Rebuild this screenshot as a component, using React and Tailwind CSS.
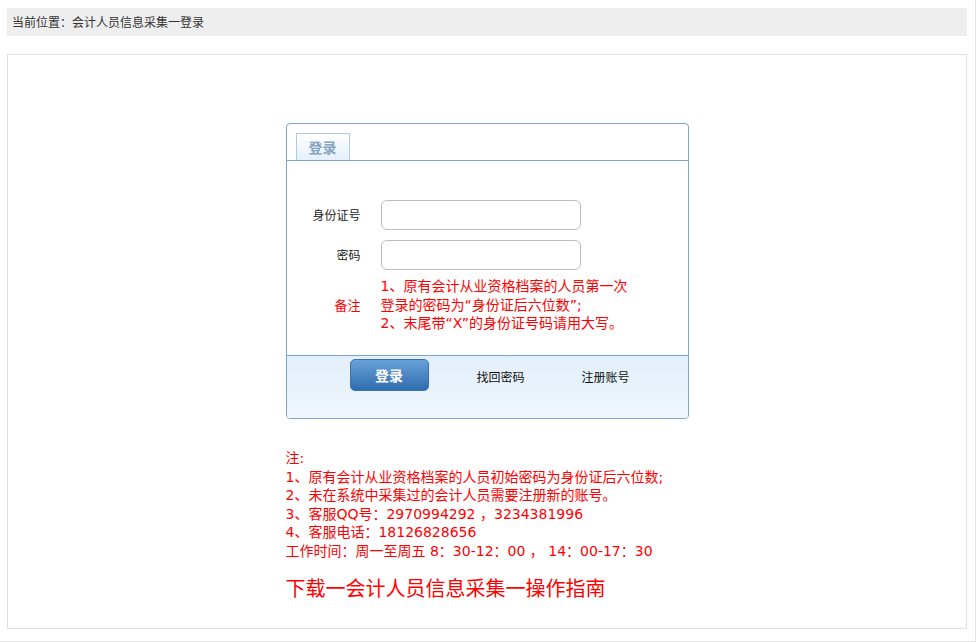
import React, { useState } from "react";

const LoginPage = () => {
  const [formData, setFormData] = useState({ idcard: "", password: "" });

  const handleChange = (event) => {
    setFormData((prev) => ({ ...prev, [event.target.name]: event.target.value }));
  };

  return (
    <div
      className="w-[976px] h-[642px] bg-white border-r border-b border-[#e2e2e2] pt-2 px-[7px] text-[#333]"
      style={{ fontFamily: '"Noto Sans CJK SC", "Noto Sans", sans-serif' }}
    >
      {/* breadcrumb */}
      <div className="h-[28px] w-[960px] bg-[#eeeeee] pl-[5px] flex items-center text-[12px] text-[#333]">
        当前位置：会计人员信息采集一登录
      </div>

      {/* main panel */}
      <div className="mt-[18px] w-[960px] h-[575px] border border-[#dde0e6] flex flex-col items-center pt-[68px]">
        <div className="w-[403px]">
          <div className="w-[403px] h-[296px] border border-[#7aa4d2] rounded-[4px] flex flex-col overflow-hidden">
            {/* tab header */}
            <div className="h-[37px] border-b border-[#7aa4d2] pl-[9px] pt-[9px] flex">
              <div className="w-[54px] h-[27px] border border-b-0 border-[#aecbe5] bg-gradient-to-b from-white to-[#e3effb] flex items-center justify-center text-[14px] font-bold text-[#86a3c2]">
                登录
              </div>
            </div>

            {/* form */}
            <div className="flex-1 pt-[39px]">
              <div className="grid grid-cols-[74px_1fr] gap-x-[20px] items-center">
                <label className="text-[12px] text-[#222] text-right" htmlFor="idcard">
                  身份证号
                </label>
                <input
                  id="idcard"
                  name="idcard"
                  value={formData.idcard}
                  onChange={handleChange}
                  className="w-[200px] h-[30px] border border-[#bbbbbb] rounded-[6px] px-2 text-[12px] outline-none"
                />
                <label className="text-[12px] text-[#222] text-right mt-[10px]" htmlFor="password">
                  密码
                </label>
                <input
                  id="password"
                  name="password"
                  type="password"
                  value={formData.password}
                  onChange={handleChange}
                  className="w-[200px] h-[30px] mt-[10px] border border-[#bbbbbb] rounded-[6px] px-2 text-[12px] outline-none"
                />
                <div className="text-[13px] text-[#ff0000] text-right mt-[7px]">备注</div>
                <div
                  className="text-[14px] leading-[18.5px] text-[#ff0000] mt-[7px] whitespace-nowrap"
                  style={{ fontFamily: '"DejaVu Sans", "Noto Sans CJK SC", sans-serif' }}
                >
                  1、原有会计从业资格档案的人员第一次
                  <br />
                  登录的密码为“身份证后六位数”;
                  <br />
                  2、末尾带“X”的身份证号码请用大写。
                </div>
              </div>
            </div>

            {/* footer */}
            <div className="h-[63px] border-t border-[#7aa4d2] bg-gradient-to-b from-[#e2eefa] to-[#f0f7fd] flex items-start pt-[3px]">
              <button
                type="button"
                className="ml-[63px] w-[79px] h-[32px] rounded-[5px] border border-[#3b72ad] bg-gradient-to-b from-[#69a1d8] to-[#2f6daf] text-white text-[14px] font-bold"
              >
                登录
              </button>
              <a className="ml-[48px] mt-[9px] text-[12px] text-[#111]" href="#">
                找回密码
              </a>
              <a className="ml-[57px] mt-[9px] text-[12px] text-[#111]" href="#">
                注册账号
              </a>
            </div>
          </div>

          {/* notes */}
          <div
            className="mt-[30px] text-[14px] leading-[18.6px] text-[#ff0000] whitespace-nowrap"
            style={{ fontFamily: '"DejaVu Sans", "Noto Sans CJK SC", sans-serif' }}
          >
            <div>注:</div>
            <div>1、原有会计从业资格档案的人员初始密码为身份证后六位数;</div>
            <div>2、未在系统中采集过的会计人员需要注册新的账号。</div>
            <div>3、客服QQ号：2970994292 ，3234381996</div>
            <div>4、客服电话：18126828656</div>
            <div>工作时间：周一至周五 8：30-12：00 ， 14：00-17：30</div>
          </div>

          <a href="#" className="block mt-[13px] text-[20px] leading-[28px] text-[#ff0000] whitespace-nowrap">
            下载一会计人员信息采集一操作指南
          </a>
        </div>
      </div>
    </div>
  );
};

export default LoginPage;
